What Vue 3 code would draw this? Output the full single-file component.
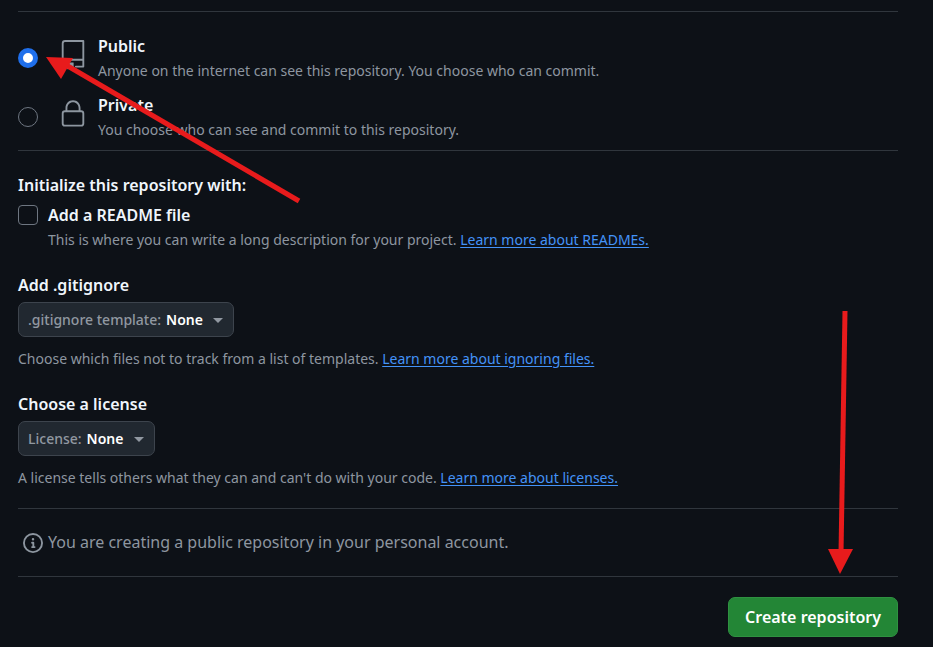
<script setup>
import { ref } from 'vue'

const visibility = ref('public')
const readme = ref(false)

const choices = [
  {
    value: 'public',
    title: 'Public',
    text: 'Anyone on the internet can see this repository. You choose who can commit.',
    icon: 'M3 2.75A2.75 2.75 0 0 1 5.75 0h14.5a.75.75 0 0 1 .75.75v20.5a.75.75 0 0 1-.75.75h-6a.75.75 0 0 1 0-1.5h5.25v-4H6A1.5 1.5 0 0 0 4.5 18v.75c0 .716.43 1.334 1.05 1.605a.75.75 0 0 1-.6 1.374A3.251 3.251 0 0 1 3 18.75ZM19.5 1.5H5.75c-.69 0-1.25.56-1.25 1.25v12.651A2.989 2.989 0 0 1 6 15h13.5ZM7 18.25a.25.25 0 0 1 .25-.25h5a.25.25 0 0 1 .25.25v5.01a.25.25 0 0 1-.397.201l-2.206-1.604a.25.25 0 0 0-.294 0L7.397 23.46a.25.25 0 0 1-.397-.2Z'
  },
  {
    value: 'private',
    title: 'Private',
    text: 'You choose who can see and commit to this repository.',
    icon: 'M6 9V7.25C6 3.845 8.503 1 12 1s6 2.845 6 6.25V9h.5a2.5 2.5 0 0 1 2.5 2.5v8a2.5 2.5 0 0 1-2.5 2.5h-13A2.5 2.5 0 0 1 3 19.5v-8A2.5 2.5 0 0 1 5.5 9Zm-1.5 2.5v8a1 1 0 0 0 1 1h13a1 1 0 0 0 1-1v-8a1 1 0 0 0-1-1h-13a1 1 0 0 0-1 1Zm3-4.25V9h9V7.25c0-2.67-1.922-4.75-4.5-4.75-2.578 0-4.5 2.08-4.5 4.75Z'
  }
]

const pickers = [
  {
    id: 'gitignore',
    heading: 'Add .gitignore',
    label: '.gitignore template:',
    text: 'Choose which files not to track from a list of templates.',
    link: 'Learn more about ignoring files.'
  },
  {
    id: 'license',
    heading: 'Choose a license',
    label: 'License:',
    text: "A license tells others what they can and can't do with your code.",
    link: 'Learn more about licenses.'
  }
]
</script>

<template>
  <form class="page" @submit.prevent>
    <div class="visibility" role="radiogroup">
      <label v-for="c in choices" :key="c.value" class="choice">
        <input v-model="visibility" class="radio" type="radio" name="visibility" :value="c.value" />
        <svg class="choice-icon" viewBox="0 0 24 24" aria-hidden="true"><path :d="c.icon" /></svg>
        <span class="stack">
          <span class="title">{{ c.title }}</span>
          <span class="note">{{ c.text }}</span>
        </span>
      </label>
    </div>

    <section class="init">
      <h2 class="title">Initialize this repository with:</h2>
      <div class="readme">
        <input id="readme" v-model="readme" class="check" type="checkbox" />
        <div class="stack">
          <label class="title" for="readme">Add a README file</label>
          <p class="note">
            This is where you can write a long description for your project.
            <a href="#readmes">Learn more about READMEs.</a>
          </p>
        </div>
      </div>
    </section>

    <section v-for="p in pickers" :key="p.id" class="picker">
      <h2 class="title">{{ p.heading }}</h2>
      <div class="dropdown">
        <label :for="p.id">{{ p.label }}</label>
        <select :id="p.id">
          <option>None</option>
        </select>
        <svg class="caret" viewBox="0 0 10 5" aria-hidden="true"><path d="M0 0h10L5 5z" /></svg>
      </div>
      <p class="note">
        {{ p.text }}
        <a :href="'#' + p.id">{{ p.link }}</a>
      </p>
    </section>

    <p class="info">
      <svg class="info-icon" viewBox="0 0 16 16" aria-hidden="true">
        <path d="M0 8a8 8 0 1 1 16 0A8 8 0 0 1 0 8Zm8-6.5a6.5 6.5 0 1 0 0 13 6.5 6.5 0 0 0 0-13ZM6.5 7.75A.75.75 0 0 1 7.25 7h1a.75.75 0 0 1 .75.75v2.75h.25a.75.75 0 0 1 0 1.5h-2a.75.75 0 0 1 0-1.5h.25v-2h-.25a.75.75 0 0 1-.75-.75ZM8 6a1 1 0 1 1 0-2 1 1 0 0 1 0 2Z" />
      </svg>
      <span>You are creating a public repository in your personal account.</span>
    </p>

    <div class="actions">
      <button class="create" type="submit">Create repository</button>
    </div>

    <!-- Callout arrows lying over the form -->
    <svg class="arrow arrow-public" viewBox="0 0 256 150" aria-hidden="true">
      <path class="shaft" d="M20 10 253 146" />
      <path d="M0 2 27 3 15 24z" />
    </svg>
    <svg class="arrow arrow-create" viewBox="0 0 26 266" aria-hidden="true">
      <path class="shaft" d="M17 2 13 245" />
      <path d="M0 240h25L12 265z" />
    </svg>
  </form>
</template>

<style>
body {
  margin: 0;
  background: #0d1117;
}
</style>

<style scoped>
.page {
  position: relative;
  padding: 11px 35px 10px 18px;
  color: #f0f6fc;
  font-family: "Segoe UI", "Noto Sans", sans-serif;
  font-size: 14px;
  line-height: 24px;
}

h2,
p {
  margin: 0;
}

.title {
  font-size: 16px;
  font-weight: 600;
  line-height: 25px;
}

.note {
  color: #8d96a0;
}

a {
  color: #4493f8;
  text-decoration: underline;
  text-underline-offset: 2px;
}

.stack {
  display: flex;
  flex-direction: column;
  align-items: flex-start;
}

.visibility {
  display: flex;
  flex-direction: column;
  gap: 10px;
  padding: 22px 0 8px;
  border-top: 1px solid #30363d;
  border-bottom: 1px solid #30363d;
}

.choice {
  display: flex;
  align-items: flex-start;
}

.radio,
.check {
  flex: none;
  box-sizing: border-box;
  width: 20px;
  height: 20px;
  margin: 0;
  appearance: none;
  border: 1px solid #6e7681;
}

.radio {
  margin-top: 14px;
  border-radius: 50%;
}

.radio:checked {
  border: 5px solid #1f6feb;
  background: #fff;
}

.check {
  margin-top: 2px;
  border-radius: 4px;
}

.check:checked {
  background: #1f6feb;
}

.choice-icon {
  flex: none;
  width: 30px;
  height: 30px;
  margin: 6px 10px 0 20px;
  fill: #8d96a0;
}

.init {
  display: flex;
  flex-direction: column;
  gap: 5px;
  padding-top: 22px;
}

.readme {
  display: flex;
  gap: 10px;
}

.picker {
  display: flex;
  flex-direction: column;
  align-items: flex-start;
  padding-top: 21px;
}

.dropdown {
  display: flex;
  align-items: center;
  box-sizing: border-box;
  height: 35px;
  margin: 4px 0 10px;
  padding: 0 10px 0 9px;
  border: 1px solid #3d444d;
  border-radius: 7px;
  background: #212830;
  color: #9198a1;
  font-weight: 500;
}

.dropdown select {
  margin: 0 10px 0 5px;
  padding: 0;
  appearance: none;
  border: 0;
  background: transparent;
  color: #fff;
  font: inherit;
  font-weight: 600;
}

.caret {
  width: 10px;
  height: 5px;
  margin-top: 2px;
  fill: #9198a1;
}

.info {
  display: flex;
  align-items: center;
  gap: 5px;
  margin-top: 18px;
  padding: 21px 5px;
  border-top: 1px solid #30363d;
  border-bottom: 1px solid #30363d;
  color: #8d96a0;
  font-size: 16px;
  line-height: 25px;
}

.info-icon {
  flex: none;
  width: 20px;
  height: 20px;
  fill: #8d96a0;
}

.actions {
  display: flex;
  justify-content: flex-end;
  padding-top: 20px;
}

.create {
  height: 40px;
  padding: 0 16px;
  border: 1px solid #2f9141;
  border-radius: 7px;
  background: #238636;
  color: #fff;
  font: inherit;
  font-size: 16px;
  font-weight: 600;
}

.arrow {
  position: absolute;
  fill: #e81b1c;
  pointer-events: none;
}

.shaft {
  fill: none;
  stroke: #e81b1c;
  stroke-width: 5;
}

.arrow-public {
  top: 55px;
  left: 46px;
  width: 256px;
  height: 150px;
}

.arrow-create {
  top: 309px;
  right: 79px;
  width: 26px;
  height: 266px;
}
</style>
